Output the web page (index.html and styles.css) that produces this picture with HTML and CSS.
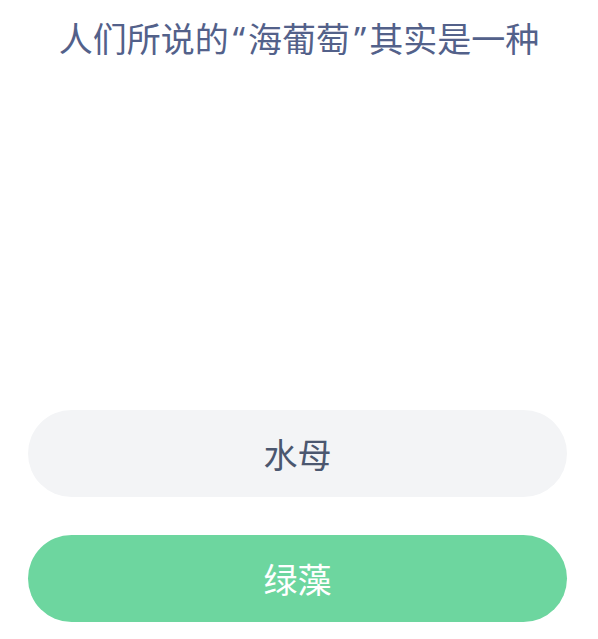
FILE: index.html
```html
<!DOCTYPE html>
<html lang="zh-CN">
<head>
<meta charset="utf-8">
<link rel="stylesheet" href="styles.css">
</head>
<body>
<div class="page">
  <h1 class="question">人们所说的<span class="quote">“</span>海葡萄<span class="quote">”</span>其实是一种</h1>
  <div class="picture"></div>
  <div class="options">
    <div class="option option-plain">水母</div>
    <div class="option option-correct">绿藻</div>
  </div>
</div>
</body>
</html>
```

FILE: styles.css
```css
html, body {
  margin: 0;
  padding: 0;
  background: #ffffff;
}
.page {
  width: 598px;
  height: 639px;
  display: flex;
  flex-direction: column;
  font-family: "Noto Sans CJK SC", "Noto Sans", sans-serif;
  overflow: hidden;
}
.question {
  margin: 15px 0 0 0;
  height: 48px;
  line-height: 48px;
  font-family: "Noto Sans", "Noto Sans CJK SC", sans-serif;
  font-size: 34px;
  font-weight: 400;
  color: #53618a;
  text-align: center;
  white-space: nowrap;
}
.quote {
  margin: 0 3px 0 4px;
}
.picture {
  height: 347px;
}
.options {
  display: flex;
  flex-direction: column;
  gap: 38px;
  padding: 0 31px 0 28px;
}
.option {
  height: 87px;
  border-radius: 44px;
  display: flex;
  align-items: center;
  justify-content: center;
  font-size: 34px;
  line-height: 1;
}
.option-plain {
  background: #f3f4f6;
  color: #4b576f;
}
.option-correct {
  background: #6dd69f;
  color: #ffffff;
}
```
